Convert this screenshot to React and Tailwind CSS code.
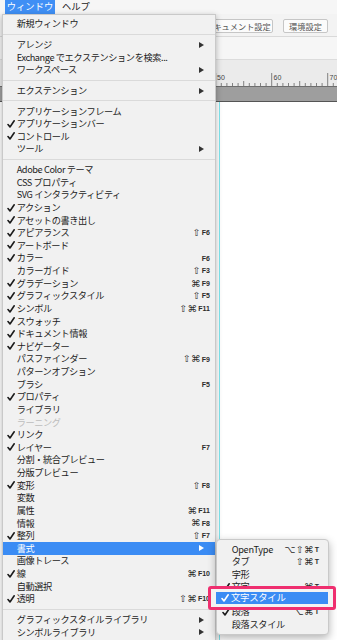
import React from 'react';

const font = "font-['Noto_Sans_CJK_JP','Noto_Sans',sans-serif]";

const menuItems = [
  { t: '新規ウィンドウ' },
  'sep',
  { t: 'アレンジ', sub: true },
  { t: 'Exchange でエクステンションを検索...' },
  { t: 'ワークスペース', sub: true },
  'sep',
  { t: 'エクステンション', sub: true },
  'sep',
  { t: 'アプリケーションフレーム' },
  { t: 'アプリケーションバー', c: true },
  { t: 'コントロール', c: true },
  { t: 'ツール', sub: true },
  'sep',
  { t: 'Adobe Color テーマ' },
  { t: 'CSS プロパティ' },
  { t: 'SVG インタラクティビティ' },
  { t: 'アクション', c: true },
  { t: 'アセットの書き出し', c: true },
  { t: 'アピアランス', c: true, k: ['⇧', 'F6'] },
  { t: 'アートボード', c: true },
  { t: 'カラー', c: true, k: ['', 'F6'] },
  { t: 'カラーガイド', k: ['⇧', 'F3'] },
  { t: 'グラデーション', c: true, k: ['⌘', 'F9'] },
  { t: 'グラフィックスタイル', c: true, k: ['⇧', 'F5'] },
  { t: 'シンボル', c: true, k: ['⇧⌘', 'F11'] },
  { t: 'スウォッチ', c: true },
  { t: 'ドキュメント情報', c: true },
  { t: 'ナビゲーター', c: true },
  { t: 'パスファインダー', k: ['⇧⌘', 'F9'] },
  { t: 'パターンオプション' },
  { t: 'ブラシ', k: ['', 'F5'] },
  { t: 'プロパティ', c: true },
  { t: 'ライブラリ' },
  { t: 'ラーニング', dis: true },
  { t: 'リンク', c: true },
  { t: 'レイヤー', c: true, k: ['', 'F7'] },
  { t: '分割・統合プレビュー' },
  { t: '分版プレビュー' },
  { t: '変形', c: true, k: ['⇧', 'F8'] },
  { t: '変数' },
  { t: '属性', k: ['⌘', 'F11'] },
  { t: '情報', k: ['⌘', 'F8'] },
  { t: '整列', c: true, k: ['⇧', 'F7'] },
  { t: '書式', sub: true, hi: true },
  { t: '画像トレース' },
  { t: '線', c: true, k: ['⌘', 'F10'] },
  { t: '自動選択' },
  { t: '透明', c: true, k: ['⇧⌘', 'F10'] },
  'sep',
  { t: 'グラフィックスタイルライブラリ', sub: true },
  { t: 'シンボルライブラリ', sub: true },
];

const subItems = [
  { t: 'OpenType', k: ['⌥⇧⌘', 'T'] },
  { t: 'タブ', k: ['⇧⌘', 'T'] },
  { t: '字形' },
  { t: '文字', c: true, k: ['⌘', 'T'] },
  { t: '文字スタイル', c: true },
  { t: '段落', c: true, k: ['⌥⌘', 'T'] },
  { t: '段落スタイル' },
];

function Check({ className }) {
  return (
    <svg width="8" height="8" viewBox="0 0 8 8" className={className}>
      <path d="M1 4.6 L3 7 L7.2 0.8" fill="none" stroke="currentColor" strokeWidth="1.6" strokeLinecap="round" strokeLinejoin="round" />
    </svg>
  );
}

function Arrow() {
  return (
    <svg width="5" height="6" viewBox="0 0 5 6">
      <path d="M0 0 L5 3 L0 6 Z" fill="currentColor" />
    </svg>
  );
}

function Keys({ k }) {
  return (
    <span className="flex items-center text-[#2b2b2b]">
      {k[0] && <span className="font-['DejaVu_Sans',sans-serif] text-[9.5px] leading-none tracking-[0.3px]">{k[0]}</span>}
      <span className="font-['Liberation_Sans',sans-serif] font-bold text-[7px] leading-none ml-[1px] tracking-normal">{k[1]}</span>
    </span>
  );
}

function MenuRow({ item }) {
  const color = item.hi ? 'text-white' : item.dis ? 'text-[#bdbdbd]' : 'text-[#1c1c1c]';
  return (
    <div className={`flex items-center h-[12.63px] ${item.hi ? 'bg-[#3b8cf4]' : ''} ${color}`}>
      <div className="w-[13.7px] flex justify-end pr-[2px]">
        {item.c && <Check />}
      </div>
      <span className="flex-1 whitespace-nowrap leading-none">{item.t}</span>
      {item.k && <span className="mr-[5px]"><Keys k={item.k} /></span>}
      {item.sub && <span className={`mr-[11px] ${item.hi ? 'text-white' : 'text-[#333]'}`}><Arrow /></span>}
    </div>
  );
}

function Separator() {
  return (
    <div className="h-[8px] flex items-center">
      <div className="w-full h-[1px] bg-[#dadada]" />
    </div>
  );
}

function SubRow({ item }) {
  return (
    <div className="flex items-center h-[12.5px] text-[#1c1c1c]">
      <div className="w-[14.7px] flex justify-end pr-[2px]">
        {item.c && <Check />}
      </div>
      <span className="flex-1 whitespace-nowrap leading-none">{item.t}</span>
      {item.k && <span className="mr-[9px]"><Keys k={item.k} /></span>}
    </div>
  );
}

function Ruler() {
  const ticks = [];
  for (let i = 0; i < 60; i++) {
    const x = 215.7 + (i - 30) * 5.6;
    if (x < 0 || x > 337) continue;
    const major = i % 10 === 0;
    const mid = i % 10 === 5;
    ticks.push(
      <line
        key={i}
        x1={x}
        x2={x}
        y1={major ? 0 : mid ? 8 : 10}
        y2={13}
        stroke="#555"
        strokeWidth="0.7"
      />
    );
  }
  return (
    <svg width="337" height="13" className="block">
      {ticks}
      <text x="217" y="7" fontSize="7" fill="#444" fontFamily="Liberation Sans">50</text>
      <text x="273.5" y="7" fontSize="7" fill="#444" fontFamily="Liberation Sans">60</text>
      <text x="329.5" y="7" fontSize="7" fill="#444" fontFamily="Liberation Sans">70</text>
    </svg>
  );
}

export default function App() {
  return (
    <div className={`relative w-[337px] h-[640px] overflow-hidden bg-white ${font}`}>
      {/* background app */}
      <div className="flex flex-col h-full">
        <div className="h-[14px] flex bg-[#f6f6f6] text-[9.3px] text-[#222]">
          <div className="ml-[5px] w-[50px] bg-[#3f8ff5] text-white flex items-center justify-center">ウィンドウ</div>
          <div className="ml-[7px] flex items-center">ヘルプ</div>
        </div>
        <div className="h-[23px] bg-[#f3f3f3] border-b border-[#d9d9d9] flex justify-end gap-[10px] pr-[9px] pt-[5px]">
          <div className="w-[70px] h-[13.5px] border border-[#c6c6c6] rounded-[2px] bg-[#fbfbfb] text-[8.2px] text-[#555] flex items-center justify-center">ドキュメント設定</div>
          <div className="w-[45px] h-[13.5px] border border-[#c6c6c6] rounded-[2px] bg-[#fbfbfb] text-[8.2px] text-[#555] flex items-center justify-center">環境設定</div>
        </div>
        <div className="h-[22px] bg-[#f6f6f6]" />
        <div className="h-[14px] bg-[#ebebeb] border-t border-[#dcdcdc]" />
        <div className="h-[13px] bg-[#ebebeb]">
          <Ruler />
        </div>
        <div className="h-[16px] bg-[#9e9e9e] border-t border-[#6e6e6e] border-b border-b-[#555]" />
        <div className="flex-1 bg-white">
          <div className="ml-[219px] h-full border-l border-[#7fe6ef]" />
        </div>
      </div>

      {/* main menu */}
      <div className="absolute left-[2px] top-[14px] w-[214px] bg-[#f1f1f1] border border-[#c9c9c9] shadow-[0_2px_6px_rgba(0,0,0,0.3)] pt-[2.7px] pb-[4px] text-[9.2px] tracking-[-0.4px]">
        {menuItems.map((it, i) => (it === 'sep' ? <Separator key={i} /> : <MenuRow key={i} item={it} />))}
      </div>

      {/* submenu */}
      <div className="absolute left-[216px] top-[539.3px] w-[113px] bg-[#f1f1f1] border border-[#c9c9c9] rounded-[4px] shadow-[0_3px_8px_rgba(0,0,0,0.3)] pt-[2.8px] pb-[3px] text-[9.2px] tracking-[-0.3px]">
        {subItems.map((it, i) => <SubRow key={i} item={it} />)}
      </div>

      {/* callout */}
      <div className="absolute left-[208px] top-[586px] w-[128px] h-[24px] border-[3px] border-[#ef2f6f] rounded-[3px] bg-[#f3f3f3] pl-[5px] pr-[5px] pt-[3.3px]">
        <div className="h-[11.7px] bg-[#3b8cf4] text-white flex items-center text-[9.4px] tracking-[-0.3px]">
          <div className="w-[15px] flex justify-end pr-[2px]">
            <Check />
          </div>
          <span className="leading-none whitespace-nowrap">文字スタイル</span>
        </div>
      </div>
    </div>
  );
}
